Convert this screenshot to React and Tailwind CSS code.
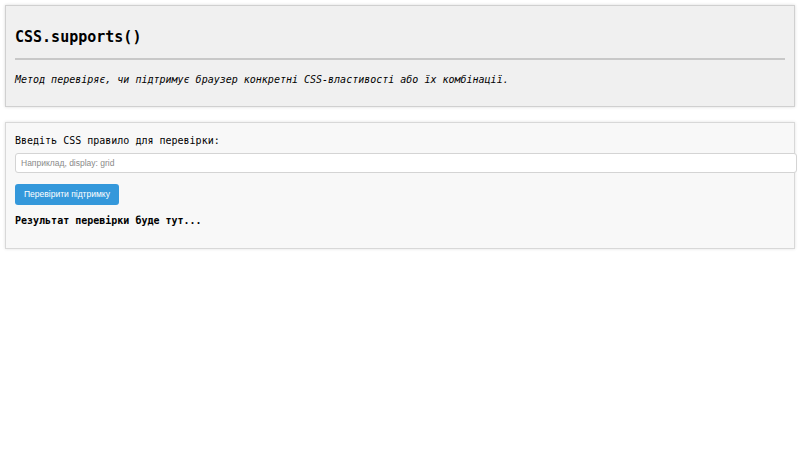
import React, { useState } from 'react';

const MONO = "font-['DejaVu_Sans_Mono','Liberation_Mono',monospace]";

export default function App() {
    const [rule, setRule] = useState('');
    const [result, setResult] = useState('Результат перевірки буде тут...');

    const check = () => {
        const ok = rule && typeof CSS !== 'undefined' && CSS.supports(rule);
        setResult(ok ? `✅ Підтримується: ${rule}` : `❌ Не підтримується: ${rule}`);
    };

    return (
        <div className={`min-h-[450px] bg-white p-[5px] text-black ${MONO}`}>
            {/* Header */}
            <div className="bg-[#f0f0f0] border border-[#d0d0d0] shadow-[0_0_3px_rgba(0,0,0,0.15)] px-[9px] pt-[22px] pb-[20px]">
                <h2 className="text-[15px] leading-[18px] font-bold">CSS.supports()</h2>
                <hr className="mt-[12px] border-0 border-t-2 border-[#c8c8c8]" />
                <p className="mt-[14px] text-[10px] leading-[12px] italic">
                    Метод перевіряє, чи підтримує браузер конкретні CSS-властивості або їх комбінації.
                </p>
            </div>

            {/* Checker */}
            <div className="mt-[15px] bg-[#f8f8f8] border border-[#d8d8d8] shadow-[0_0_3px_rgba(0,0,0,0.12)] px-[9px] pt-[12px] pb-[21px]">
                <label className="block text-[10px] leading-[12px]">Введіть CSS правило для перевірки:</label>
                <input
                    value={rule}
                    onChange={(e) => setRule(e.target.value)}
                    placeholder="Наприклад, display: grid"
                    className="mt-[6px] box-content block w-full h-[18px] px-[5px] bg-white border border-[#d4d4d4] rounded-[3px] text-[8.5px] font-['Liberation_Sans',Arial,sans-serif] placeholder:text-[#8a8a8a] outline-none"
                />
                <button
                    onClick={check}
                    className="mt-[11px] h-[21px] px-[9px] bg-[#3498db] text-white text-[8.5px] rounded-[3px] font-['Liberation_Sans',Arial,sans-serif]"
                >
                    Перевірити підтримку
                </button>
                <p className="mt-[10px] text-[10px] leading-[12px] font-bold">{result}</p>
            </div>
        </div>
    );
}
